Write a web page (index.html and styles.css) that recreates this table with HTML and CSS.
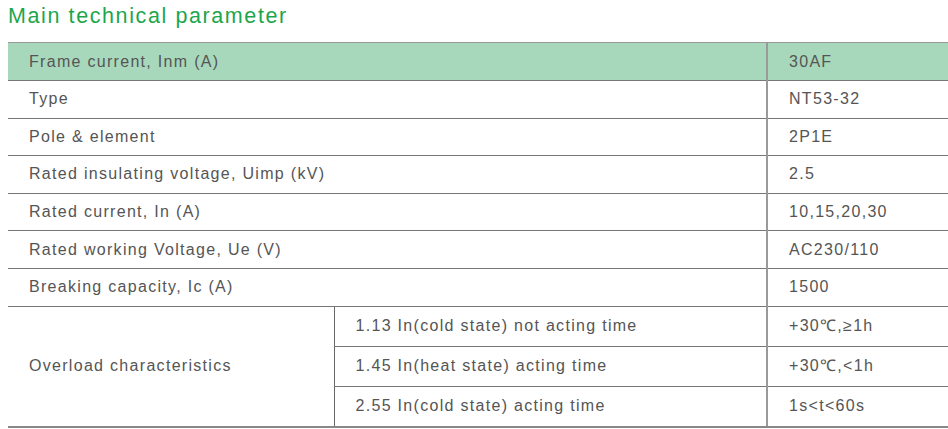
FILE: index.html
```html
<!DOCTYPE html>
<html lang="en">
<head>
<meta charset="utf-8">
<title>Main technical parameter</title>
<link rel="stylesheet" href="styles.css">
</head>
<body>
<div class="page">
  <h1 class="title">Main technical parameter</h1>
  <table class="spec">
    <colgroup>
      <col class="c1"><col class="c2"><col class="c3">
    </colgroup>
    <tbody>
      <tr class="head"><td colspan="2">Frame current, Inm (A)</td><td class="val">30AF</td></tr>
      <tr><td colspan="2">Type</td><td class="val">NT53-32</td></tr>
      <tr><td colspan="2">Pole &amp; element</td><td class="val">2P1E</td></tr>
      <tr><td colspan="2">Rated insulating voltage, Uimp (kV)</td><td class="val">2.5</td></tr>
      <tr><td colspan="2">Rated current, In (A)</td><td class="val">10,15,20,30</td></tr>
      <tr><td colspan="2">Rated working Voltage, Ue (V)</td><td class="val">AC230/110</td></tr>
      <tr><td colspan="2">Breaking capacity, Ic (A)</td><td class="val">1500</td></tr>
      <tr class="sub"><td rowspan="3" class="group">Overload characteristics</td><td class="mid">1.13 In(cold state) not acting time</td><td class="val">+30℃,≥1h</td></tr>
      <tr class="sub"><td class="mid">1.45 In(heat state) acting time</td><td class="val">+30℃,&lt;1h</td></tr>
      <tr class="sub"><td class="mid">2.55 In(cold state) acting time</td><td class="val">1s&lt;t&lt;60s</td></tr>
    </tbody>
  </table>
</div>
</body>
</html>
```
FILE: styles.css
```css
html, body {
  margin: 0;
  padding: 0;
  background: #ffffff;
}
.page {
  padding: 0 0 0 8px;
  font-family: "Liberation Sans", Arial, sans-serif;
  color: #555555;
  overflow: hidden;
}
.title {
  margin: 0;
  height: 42px;
  padding-top: 3px;
  box-sizing: border-box;
  font-size: 21.5px;
  font-weight: normal;
  color: #1ca64c;
  letter-spacing: 1.6px;
  line-height: 26px;
}
.spec {
  border-collapse: collapse;
  width: 940px;
  table-layout: fixed;
  font-size: 16px;
  letter-spacing: 1.3px;
}
.c1 { width: 326px; }
.c2 { width: 433px; }
.c3 { width: 181px; }
.spec td {
  height: 36.6px;
  padding: 0 0 0 21px;
  border-top: 1px solid #777777;
  border-bottom: 1px solid #777777;
  vertical-align: middle;
  white-space: nowrap;
  line-height: 18px;
}
.spec tr:first-child td {
  border-top: 1px solid #999999;
}
.spec td.val {
  border-left: 2px solid #9a9a9a;
}
.spec td.mid {
  border-left: 1px solid #666666;
}
.spec tr.sub td {
  height: 39px;
}
.spec td.group {
  height: auto;
}
.spec tr:last-child td,
.spec td.group {
  border-bottom: 2px solid #888888;
}
.spec tr.head td {
  background: #a8d8bb;
  height: 37px;
}
```
